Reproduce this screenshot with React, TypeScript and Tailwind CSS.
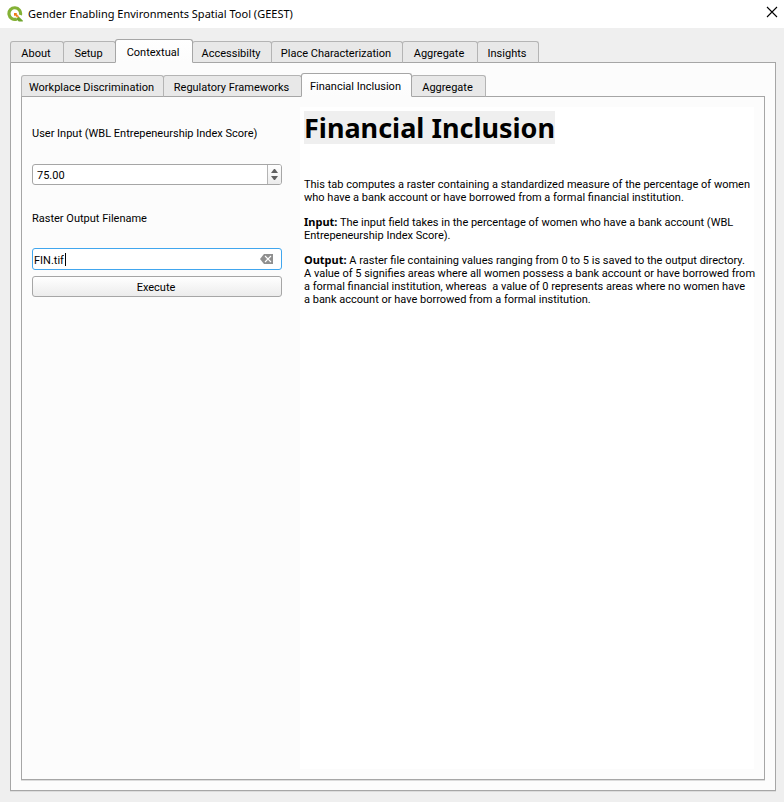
import { useState } from "react";
import type { ReactNode } from "react";

type TabItem = { label: string; width: string };

const mainTabs: TabItem[] = [
  { label: "About", width: "w-[54px]" },
  { label: "Setup", width: "w-[53px]" },
  { label: "Contextual", width: "w-[78px]" },
  { label: "Accessibilty", width: "w-[80px]" },
  { label: "Place Characterization", width: "w-[132px]" },
  { label: "Aggregate", width: "w-[76px]" },
  { label: "Insights", width: "w-[62px]" },
];

const contextualTabs: TabItem[] = [
  { label: "Workplace Discrimination", width: "w-[143px]" },
  { label: "Regulatory Frameworks", width: "w-[139px]" },
  { label: "Financial Inclusion", width: "w-[111px]" },
  { label: "Aggregate", width: "w-[75px]" },
];

function TabPanel({
  items,
  active,
  children,
}: {
  items: TabItem[];
  active: string;
  children: ReactNode;
}) {
  return (
    <section className="flex grow flex-col">
      <div role="tablist" className="z-10 -mb-px flex h-6 items-end">
        {items.map((tab) => {
          const selected = tab.label === active;
          return (
            <button
              key={tab.label}
              type="button"
              role="tab"
              aria-selected={selected}
              className={`-mr-px shrink-0 rounded-t-[3px] border pt-0.5 pr-0.5 whitespace-nowrap ${tab.width} ${
                selected
                  ? "z-10 h-6 border-[#a6a6a6] border-b-[#fcfcfc] bg-linear-to-b from-white to-[#fcfcfc]"
                  : "h-[22px] border-[#b4b4b4] border-b-[#a6a6a6] bg-[#e8e8e8]"
              }`}
            >
              {tab.label}
            </button>
          );
        })}
      </div>
      <div className="flex grow flex-col border border-[#a6a6a6] bg-[#fcfcfc] p-2.5 shadow-[0_1px_0_#dcdcdc]">
        {children}
      </div>
    </section>
  );
}

function QgisLogo() {
  return (
    <svg viewBox="0 0 16 16" className="size-4" aria-hidden="true">
      <path
        d="M9.8 13A5.8 5.8 0 1 1 13.4 9"
        fill="none"
        stroke="#84b135"
        strokeWidth="3.2"
      />
      <path d="M11.6 10.4 15.8 14.6V15.6H11.8L9.2 13z" fill="#6fa52e" />
      <path d="M7 7H10.2L9.6 7.8 12.2 10.4 10.6 12 8 9.4 7 10.2z" fill="#f0a04a" />
      <path d="M7 7H9.6L9 8.2 10.6 9.8 9.8 10.6 8.2 9 7 9.6z" fill="#ee7913" />
    </svg>
  );
}

function Lead({ children }: { children: ReactNode }) {
  return <b className="font-['Noto_Sans',sans-serif] leading-[11px]">{children}</b>;
}

export default function App() {
  const [score, setScore] = useState("75.00");
  const [filename, setFilename] = useState("FIN.tif");
  const step = (by: number) => setScore((Number(score) + by).toFixed(2));

  return (
    <div className="flex min-h-screen flex-col bg-[#efefef] font-[Roboto,sans-serif] text-[11px] leading-[13px] text-black">
      <header className="flex h-7 items-center bg-white pr-1.5 pl-[7px]">
        <QgisLogo />
        <h1 className="ml-[5px] grow font-['Noto_Sans',sans-serif] leading-4">
          Gender Enabling Environments Spatial Tool (GEEST)
        </h1>
        <button type="button" aria-label="Close">
          <svg viewBox="0 0 12 12" className="mb-1 size-3" aria-hidden="true">
            <path d="M1 1 11 11M11 1 1 11" stroke="#000" strokeWidth="1.1" />
          </svg>
        </button>
      </header>

      <main className="flex grow flex-col pt-[11px] pr-2 pb-[11px] pl-2.5">
        <TabPanel items={mainTabs} active="Contextual">
          <TabPanel items={contextualTabs} active="Financial Inclusion">
            <div className="flex grow gap-[18px]">
              <form className="flex w-[250px] shrink-0 flex-col" onSubmit={(e) => e.preventDefault()}>
                <label htmlFor="score" className="mt-5 mb-6">
                  User Input (WBL Entrepeneurship Index Score)
                </label>
                <div className="flex h-[21px] overflow-hidden rounded-[3px] border border-[#a6a6a6] bg-white">
                  <input
                    id="score"
                    type="text"
                    inputMode="decimal"
                    value={score}
                    onChange={(e) => setScore(e.target.value)}
                    className="min-w-0 grow px-1 pt-0.5 outline-none"
                  />
                  <div className="flex w-[14px] flex-col border-l border-[#b4b4b4] bg-linear-to-b from-white to-[#ececec] py-0.5">
                    <button type="button" aria-label="Increase" onClick={() => step(1)} className="flex grow items-center justify-center">
                      <svg viewBox="0 0 7 4" className="h-1 w-[7px]" aria-hidden="true">
                        <path d="M0 4 3 0H4L7 4z" fill="#5f5f5f" />
                      </svg>
                    </button>
                    <button type="button" aria-label="Decrease" onClick={() => step(-1)} className="flex grow items-center justify-center">
                      <svg viewBox="0 0 7 4" className="h-1 w-[7px]" aria-hidden="true">
                        <path d="M0 0H7L4 4H3z" fill="#5f5f5f" />
                      </svg>
                    </button>
                  </div>
                </div>
                <label htmlFor="filename" className="mt-[27px] mb-[23px]">
                  Raster Output Filename
                </label>
                <div className="flex h-[22px] items-center rounded-[3px] border border-[#41a6ee] bg-white pr-2">
                  <input
                    id="filename"
                    type="text"
                    value={filename}
                    onChange={(e) => setFilename(e.target.value)}
                    className="field-sizing-content h-full max-w-[210px] px-px pt-0.5 caret-transparent outline-none"
                  />
                  <span className="h-[13px] w-px bg-black" />
                  <button type="button" aria-label="Clear" onClick={() => setFilename("")} className="ml-auto">
                    <svg viewBox="0 0 13 10" className="h-2.5 w-[13px]" aria-hidden="true">
                      <path d="M0 5 4 0H13V10H4z" fill="#8f8f8f" />
                      <path d="M5 2 11 8M11 2 5 8" stroke="#fff" strokeWidth="1.1" />
                    </svg>
                  </button>
                </div>
                <button
                  type="submit"
                  className="mt-1.5 h-[21px] rounded-[3px] border border-[#a6a6a6] bg-linear-to-b from-white to-[#ececec] pt-0.5 pr-0.5"
                >
                  Execute
                </button>
              </form>

              <article className="min-w-0 grow bg-white pt-1 pl-1">
                <h2 className="font-['Noto_Sans',sans-serif] text-[27px] leading-[33px] font-bold">
                  <span className="inline-block bg-[#efefef]">Financial Inclusion</span>
                </h2>
                <p className="mt-[34px] pr-1 text-justify">
                  This tab computes a raster containing a standardized measure of the percentage of women
                  who have a bank account or have borrowed from a formal financial institution.
                </p>
                <p className="mt-3 whitespace-nowrap">
                  <Lead>Input:</Lead> The input field takes in the percentage of women who have a bank account (WBL
                  <br />
                  Entrepeneurship Index Score).
                </p>
                <p className="mt-3 whitespace-nowrap">
                  <Lead>Output:</Lead> A raster file containing values ranging from 0 to 5 is saved to the output directory.
                  <br />
                  A value of 5 signifies areas where all women possess a bank account or have borrowed from
                  <br />
                  a formal financial institution, whereas&nbsp; a value of 0 represents areas where no women have
                  <br />
                  a bank account or have borrowed from a formal institution.
                </p>
              </article>
            </div>
          </TabPanel>
        </TabPanel>
      </main>
    </div>
  );
}
